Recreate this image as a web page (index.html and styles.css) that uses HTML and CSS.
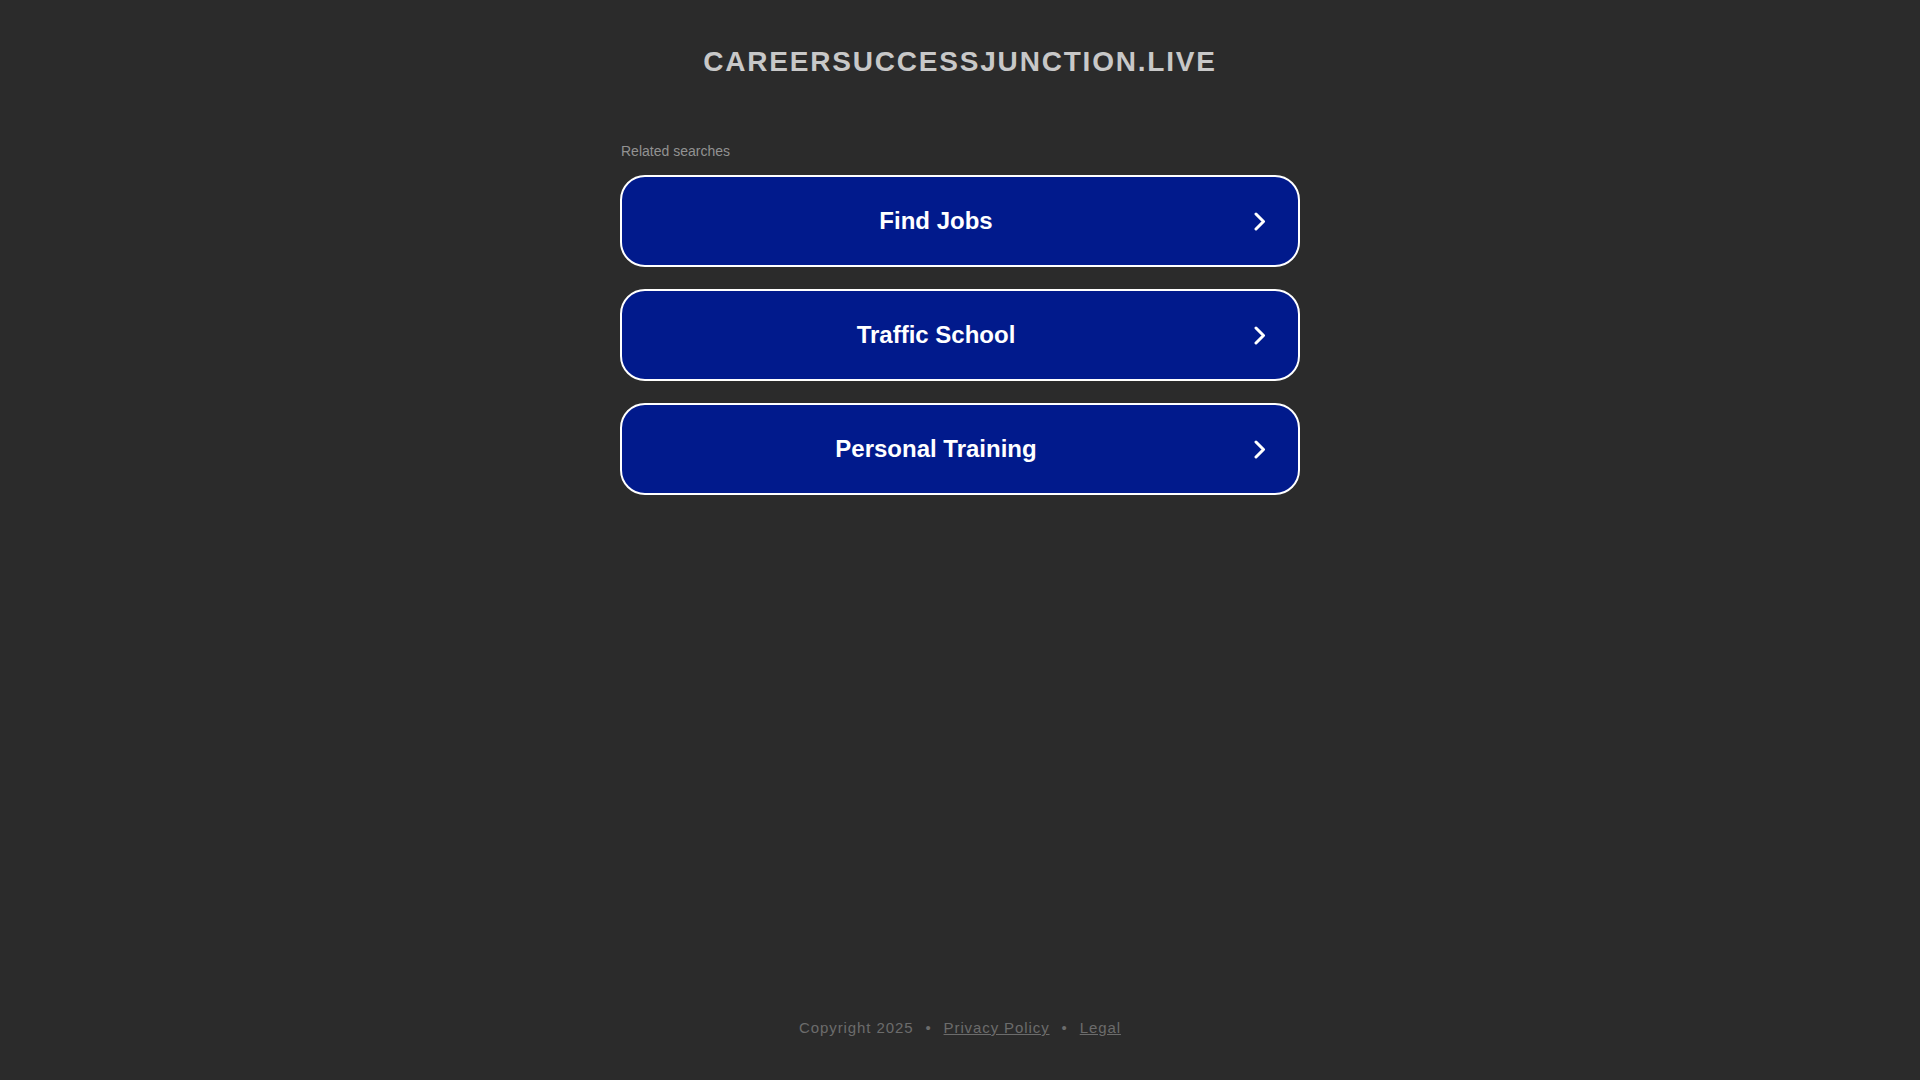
FILE: index.html
```html
<!DOCTYPE html>
<html lang="en">
<head>
<meta charset="utf-8">
<title>careersuccessjunction.live</title>
<link rel="stylesheet" href="styles.css">
</head>
<body>
<div class="page">
  <header class="header">
    <h1 class="domain">careersuccessjunction.live</h1>
  </header>
  <main class="main">
    <div class="related">Related searches</div>
    <div class="cards">
      <a class="card" href="#"><span class="card-text">Find Jobs</span><svg class="chev" viewBox="0 0 12 19" width="12" height="19"><path d="M2 2 L9.5 9.5 L2 17" fill="none" stroke="#fff" stroke-width="3" stroke-linecap="round" stroke-linejoin="round"/></svg></a>
      <a class="card" href="#"><span class="card-text">Traffic School</span><svg class="chev" viewBox="0 0 12 19" width="12" height="19"><path d="M2 2 L9.5 9.5 L2 17" fill="none" stroke="#fff" stroke-width="3" stroke-linecap="round" stroke-linejoin="round"/></svg></a>
      <a class="card" href="#"><span class="card-text">Personal Training</span><svg class="chev" viewBox="0 0 12 19" width="12" height="19"><path d="M2 2 L9.5 9.5 L2 17" fill="none" stroke="#fff" stroke-width="3" stroke-linecap="round" stroke-linejoin="round"/></svg></a>
    </div>
  </main>
  <footer class="footer">
    <span>Copyright 2025</span><span class="sep">&bull;</span><a href="#">Privacy Policy</a><span class="sep">&bull;</span><a href="#">Legal</a>
  </footer>
</div>
</body>
</html>
```
FILE: styles.css
```css
html, body {
  margin: 0;
  padding: 0;
  background: #2b2b2b;
}
body {
  font-family: "Liberation Sans", Arial, sans-serif;
}
.page {
  min-height: 100vh;
  display: flex;
  flex-direction: column;
}
.header {
  padding-top: 45px;
  text-align: center;
}
.domain {
  margin: 0;
  font-size: 28px;
  line-height: 34px;
  font-weight: bold;
  text-transform: uppercase;
  letter-spacing: 1.8px;
  color: #c8c8c8;
}
.main {
  width: 680px;
  margin: 63px auto 0;
}
.related {
  font-size: 14px;
  line-height: 18px;
  color: #929292;
  padding-left: 1px;
}
.cards {
  margin-top: 15px;
  display: flex;
  flex-direction: column;
  gap: 22px;
}
.card {
  box-sizing: border-box;
  height: 92px;
  display: flex;
  align-items: center;
  border: 2px solid #ffffff;
  border-radius: 25px;
  background: #011a8c;
  text-decoration: none;
  color: #ffffff;
}
.card-text {
  flex: 1;
  text-align: center;
  font-size: 24px;
  font-weight: bold;
  line-height: 28px;
}
.chev {
  display: block;
  margin-left: 4px;
  margin-right: 32px;
}
.footer {
  margin-top: auto;
  padding-bottom: 42px;
  display: flex;
  justify-content: center;
  align-items: center;
  font-size: 15px;
  line-height: 20px;
  letter-spacing: 0.9px;
  color: #6c6c6c;
}
.footer a {
  color: #6c6c6c;
  text-decoration: underline;
}
.sep {
  margin: 0 12px;
}
```
